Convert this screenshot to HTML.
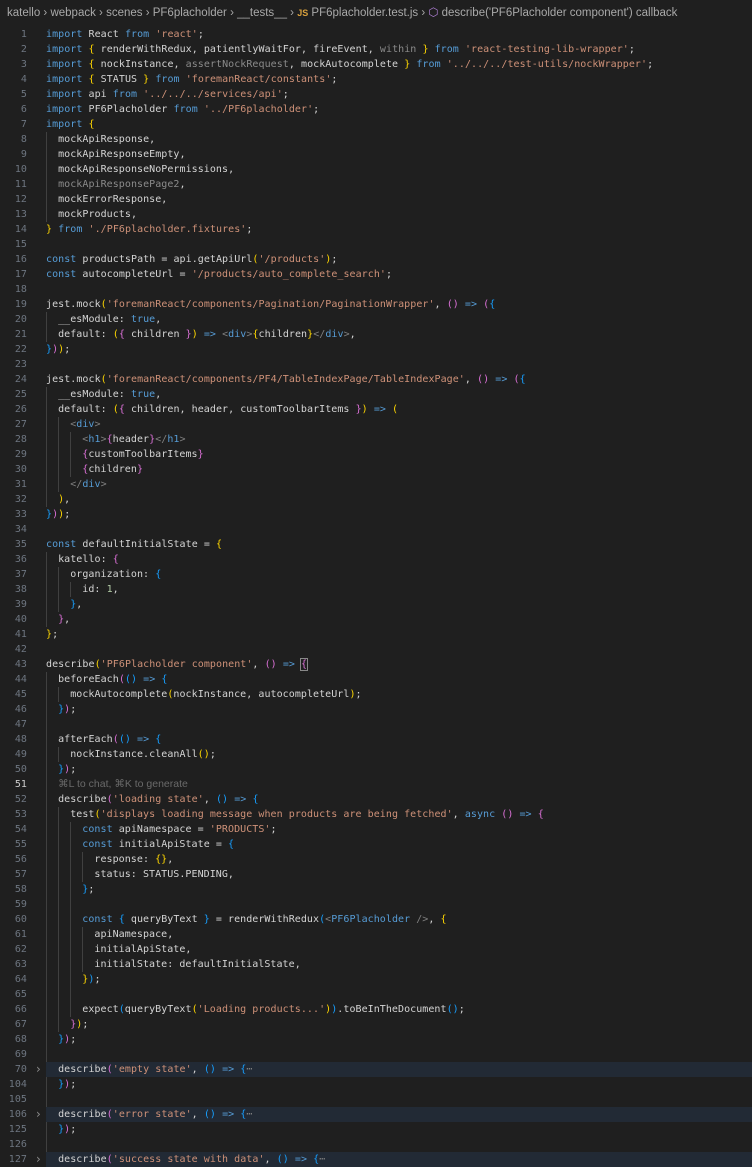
<!DOCTYPE html>
<html><head><meta charset="utf-8"><style>
body{margin:0;width:752px;height:1156px;overflow:hidden;background:#1f1f1f;font-family:"DejaVu Sans Mono",monospace;}
.bc{position:absolute;left:7px;top:5px;font:11.5px "Liberation Sans",sans-serif;color:#a9a9a9;white-space:pre;}
.bc .js{color:#d8a03d;font-size:9px;font-weight:bold;}
.code{position:absolute;left:0;top:27px;width:752px;}
.l{height:15px;line-height:15px;position:relative;white-space:pre;font-size:10px;letter-spacing:.05px;color:#d4d4d4;}
.l i{position:absolute;left:0;width:27px;text-align:right;font-style:normal;color:#6e7681;}
.l i.cur{color:#cccccc}
.l code{position:absolute;left:46px;font:inherit;}
.l .hlb{position:absolute;left:46px;right:0;top:0;bottom:0;background:#222a35;}
.fold{position:absolute;left:36px;color:#8a8a8a;font-family:"DejaVu Sans",sans-serif;font-size:12px;}
u{display:inline-block;width:12.1px;height:15px;vertical-align:top;text-decoration:none;box-shadow:inset 1px 0 0 #404040;}
.k{color:#569cd6}.s{color:#ce9178}.y{color:#ffd700}.p{color:#da70d6}.b{color:#179fff}.d{color:#8b8b8b}.t{color:#808080}.n{color:#b5cea8}.e{color:#7f7f7f}
.m{outline:1px solid #888;}
.gh{color:#6a6a6a;font-family:"Liberation Sans",sans-serif;font-size:10.5px;letter-spacing:0}
.ind{display:inline-block;width:12.1px}
</style></head><body>
<div class="bc">katello › webpack › scenes › PF6placholder › __tests__ › <span class="js">JS</span> PF6placholder.test.js › <span style="color:#b180d7">⬡</span> describe('PF6Placholder component') callback</div>
<div class="code">
<div class="l"><i>1</i><code><span class="k">import</span> React <span class="k">from</span> <span class="s">'react'</span>;</code></div>
<div class="l"><i>2</i><code><span class="k">import</span> <span class="y">{</span> renderWithRedux, patientlyWaitFor, fireEvent, <span class="d">within</span> <span class="y">}</span> <span class="k">from</span> <span class="s">'react-testing-lib-wrapper'</span>;</code></div>
<div class="l"><i>3</i><code><span class="k">import</span> <span class="y">{</span> nockInstance, <span class="d">assertNockRequest</span>, mockAutocomplete <span class="y">}</span> <span class="k">from</span> <span class="s">'../../../test-utils/nockWrapper'</span>;</code></div>
<div class="l"><i>4</i><code><span class="k">import</span> <span class="y">{</span> STATUS <span class="y">}</span> <span class="k">from</span> <span class="s">'foremanReact/constants'</span>;</code></div>
<div class="l"><i>5</i><code><span class="k">import</span> api <span class="k">from</span> <span class="s">'../../../services/api'</span>;</code></div>
<div class="l"><i>6</i><code><span class="k">import</span> PF6Placholder <span class="k">from</span> <span class="s">'../PF6placholder'</span>;</code></div>
<div class="l"><i>7</i><code><span class="k">import</span> <span class="y">{</span></code></div>
<div class="l"><i>8</i><code><u></u>mockApiResponse,</code></div>
<div class="l"><i>9</i><code><u></u>mockApiResponseEmpty,</code></div>
<div class="l"><i>10</i><code><u></u>mockApiResponseNoPermissions,</code></div>
<div class="l"><i>11</i><code><u></u><span class="d">mockApiResponsePage2</span>,</code></div>
<div class="l"><i>12</i><code><u></u>mockErrorResponse,</code></div>
<div class="l"><i>13</i><code><u></u>mockProducts,</code></div>
<div class="l"><i>14</i><code><span class="y">}</span> <span class="k">from</span> <span class="s">'./PF6placholder.fixtures'</span>;</code></div>
<div class="l"><i>15</i><code></code></div>
<div class="l"><i>16</i><code><span class="k">const</span> productsPath = api.getApiUrl<span class="y">(</span><span class="s">'/products'</span><span class="y">)</span>;</code></div>
<div class="l"><i>17</i><code><span class="k">const</span> autocompleteUrl = <span class="s">'/products/auto_complete_search'</span>;</code></div>
<div class="l"><i>18</i><code></code></div>
<div class="l"><i>19</i><code>jest.mock<span class="y">(</span><span class="s">'foremanReact/components/Pagination/PaginationWrapper'</span>, <span class="p">()</span> <span class="k">=&gt;</span> <span class="p">(</span><span class="b">{</span></code></div>
<div class="l"><i>20</i><code><u></u>__esModule: <span class="k">true</span>,</code></div>
<div class="l"><i>21</i><code><u></u>default: <span class="y">(</span><span class="p">{</span> children <span class="p">}</span><span class="y">)</span> <span class="k">=&gt;</span> <span class="t">&lt;</span><span class="k">div</span><span class="t">&gt;</span><span class="y">{</span>children<span class="y">}</span><span class="t">&lt;/</span><span class="k">div</span><span class="t">&gt;</span>,</code></div>
<div class="l"><i>22</i><code><span class="b">}</span><span class="p">)</span><span class="y">)</span>;</code></div>
<div class="l"><i>23</i><code></code></div>
<div class="l"><i>24</i><code>jest.mock<span class="y">(</span><span class="s">'foremanReact/components/PF4/TableIndexPage/TableIndexPage'</span>, <span class="p">()</span> <span class="k">=&gt;</span> <span class="p">(</span><span class="b">{</span></code></div>
<div class="l"><i>25</i><code><u></u>__esModule: <span class="k">true</span>,</code></div>
<div class="l"><i>26</i><code><u></u>default: <span class="y">(</span><span class="p">{</span> children, header, customToolbarItems <span class="p">}</span><span class="y">)</span> <span class="k">=&gt;</span> <span class="y">(</span></code></div>
<div class="l"><i>27</i><code><u></u><u></u><span class="t">&lt;</span><span class="k">div</span><span class="t">&gt;</span></code></div>
<div class="l"><i>28</i><code><u></u><u></u><u></u><span class="t">&lt;</span><span class="k">h1</span><span class="t">&gt;</span><span class="p">{</span>header<span class="p">}</span><span class="t">&lt;/</span><span class="k">h1</span><span class="t">&gt;</span></code></div>
<div class="l"><i>29</i><code><u></u><u></u><u></u><span class="p">{</span>customToolbarItems<span class="p">}</span></code></div>
<div class="l"><i>30</i><code><u></u><u></u><u></u><span class="p">{</span>children<span class="p">}</span></code></div>
<div class="l"><i>31</i><code><u></u><u></u><span class="t">&lt;/</span><span class="k">div</span><span class="t">&gt;</span></code></div>
<div class="l"><i>32</i><code><u></u><span class="y">)</span>,</code></div>
<div class="l"><i>33</i><code><span class="b">}</span><span class="p">)</span><span class="y">)</span>;</code></div>
<div class="l"><i>34</i><code></code></div>
<div class="l"><i>35</i><code><span class="k">const</span> defaultInitialState = <span class="y">{</span></code></div>
<div class="l"><i>36</i><code><u></u>katello: <span class="p">{</span></code></div>
<div class="l"><i>37</i><code><u></u><u></u>organization: <span class="b">{</span></code></div>
<div class="l"><i>38</i><code><u></u><u></u><u></u>id: <span class="n">1</span>,</code></div>
<div class="l"><i>39</i><code><u></u><u></u><span class="b">}</span>,</code></div>
<div class="l"><i>40</i><code><u></u><span class="p">}</span>,</code></div>
<div class="l"><i>41</i><code><span class="y">}</span>;</code></div>
<div class="l"><i>42</i><code></code></div>
<div class="l"><i>43</i><code>describe<span class="y">(</span><span class="s">'PF6Placholder component'</span>, <span class="p">()</span> <span class="k">=&gt;</span> <span class="p m">{</span></code></div>
<div class="l"><i>44</i><code><u></u>beforeEach<span class="p">(</span><span class="b">()</span> <span class="k">=&gt;</span> <span class="b">{</span></code></div>
<div class="l"><i>45</i><code><u></u><u></u>mockAutocomplete<span class="y">(</span>nockInstance, autocompleteUrl<span class="y">)</span>;</code></div>
<div class="l"><i>46</i><code><u></u><span class="b">}</span><span class="p">)</span>;</code></div>
<div class="l"><i>47</i><code><u></u></code></div>
<div class="l"><i>48</i><code><u></u>afterEach<span class="p">(</span><span class="b">()</span> <span class="k">=&gt;</span> <span class="b">{</span></code></div>
<div class="l"><i>49</i><code><u></u><u></u>nockInstance.cleanAll<span class="y">()</span>;</code></div>
<div class="l"><i>50</i><code><u></u><span class="b">}</span><span class="p">)</span>;</code></div>
<div class="l"><i class="cur">51</i><code><u></u><span class="gh">⌘L to chat, ⌘K to generate</span></code></div>
<div class="l"><i>52</i><code><u></u>describe<span class="p">(</span><span class="s">'loading state'</span>, <span class="b">()</span> <span class="k">=&gt;</span> <span class="b">{</span></code></div>
<div class="l"><i>53</i><code><u></u><u></u>test<span class="y">(</span><span class="s">'displays loading message when products are being fetched'</span>, <span class="k">async</span> <span class="p">()</span> <span class="k">=&gt;</span> <span class="p">{</span></code></div>
<div class="l"><i>54</i><code><u></u><u></u><u></u><span class="k">const</span> apiNamespace = <span class="s">'PRODUCTS'</span>;</code></div>
<div class="l"><i>55</i><code><u></u><u></u><u></u><span class="k">const</span> initialApiState = <span class="b">{</span></code></div>
<div class="l"><i>56</i><code><u></u><u></u><u></u><u></u>response: <span class="y">{}</span>,</code></div>
<div class="l"><i>57</i><code><u></u><u></u><u></u><u></u>status: STATUS.PENDING,</code></div>
<div class="l"><i>58</i><code><u></u><u></u><u></u><span class="b">}</span>;</code></div>
<div class="l"><i>59</i><code><u></u><u></u><u></u></code></div>
<div class="l"><i>60</i><code><u></u><u></u><u></u><span class="k">const</span> <span class="b">{</span> queryByText <span class="b">}</span> = renderWithRedux<span class="b">(</span><span class="t">&lt;</span><span class="k">PF6Placholder</span> <span class="t">/&gt;</span>, <span class="y">{</span></code></div>
<div class="l"><i>61</i><code><u></u><u></u><u></u><u></u>apiNamespace,</code></div>
<div class="l"><i>62</i><code><u></u><u></u><u></u><u></u>initialApiState,</code></div>
<div class="l"><i>63</i><code><u></u><u></u><u></u><u></u>initialState: defaultInitialState,</code></div>
<div class="l"><i>64</i><code><u></u><u></u><u></u><span class="y">}</span><span class="b">)</span>;</code></div>
<div class="l"><i>65</i><code><u></u><u></u><u></u></code></div>
<div class="l"><i>66</i><code><u></u><u></u><u></u>expect<span class="b">(</span>queryByText<span class="y">(</span><span class="s">'Loading products...'</span><span class="y">)</span><span class="b">)</span>.toBeInTheDocument<span class="b">()</span>;</code></div>
<div class="l"><i>67</i><code><u></u><u></u><span class="p">}</span><span class="y">)</span>;</code></div>
<div class="l"><i>68</i><code><u></u><span class="b">}</span><span class="p">)</span>;</code></div>
<div class="l"><i>69</i><code><u></u></code></div>
<div class="l"><span class="hlb"></span><i>70</i><span class="fold">›</span><code><span class="ind"></span>describe<span class="p">(</span><span class="s">'empty state'</span>, <span class="b">()</span> <span class="k">=&gt;</span> <span class="b">{</span><span class="e">⋯</span></code></div>
<div class="l"><i>104</i><code><u></u><span class="b">}</span><span class="p">)</span>;</code></div>
<div class="l"><i>105</i><code><u></u></code></div>
<div class="l"><span class="hlb"></span><i>106</i><span class="fold">›</span><code><span class="ind"></span>describe<span class="p">(</span><span class="s">'error state'</span>, <span class="b">()</span> <span class="k">=&gt;</span> <span class="b">{</span><span class="e">⋯</span></code></div>
<div class="l"><i>125</i><code><u></u><span class="b">}</span><span class="p">)</span>;</code></div>
<div class="l"><i>126</i><code><u></u></code></div>
<div class="l"><span class="hlb"></span><i>127</i><span class="fold">›</span><code><span class="ind"></span>describe<span class="p">(</span><span class="s">'success state with data'</span>, <span class="b">()</span> <span class="k">=&gt;</span> <span class="b">{</span><span class="e">⋯</span></code></div>
</div>
</body></html>
